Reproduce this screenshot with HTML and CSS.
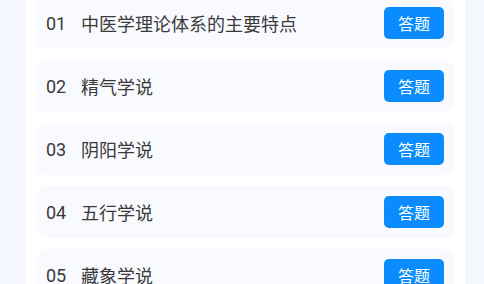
FILE: index.html
```html
<!doctype html>
<html lang="zh-CN">
	<head>
		<meta charset="UTF-8" />
		<meta name="viewport" content="width=device-width, initial-scale=1.0" />
		<title>章节列表</title>
		<link rel="stylesheet" href="styles.css">
	</head>
	<body>
		<main class="panel">
			<ul class="chapters">
				<li class="chapter">
					<span class="num">01</span>
					<span class="title">中医学理论体系的主要特点</span>
					<button type="button" class="answer">答题</button>
				</li>
				<li class="chapter">
					<span class="num">02</span>
					<span class="title">精气学说</span>
					<button type="button" class="answer">答题</button>
				</li>
				<li class="chapter">
					<span class="num">03</span>
					<span class="title">阴阳学说</span>
					<button type="button" class="answer">答题</button>
				</li>
				<li class="chapter">
					<span class="num">04</span>
					<span class="title">五行学说</span>
					<button type="button" class="answer">答题</button>
				</li>
				<li class="chapter">
					<span class="num">05</span>
					<span class="title">藏象学说</span>
					<button type="button" class="answer">答题</button>
				</li>
			</ul>
		</main>
	</body>
</html>
```

FILE: styles.css
```css
html,
body,
ul {
	margin: 0;
	padding: 0;
}

body {
	background-color: #f4f7fd;
	font-family: Roboto, "Noto Sans CJK SC", sans-serif;
	height: 284px;
	overflow: hidden;
}

.panel {
	background-color: #ffffff;
	margin: 0 19px 0 25px;
	padding: 0 11px;
	min-height: 284px;
}

/* the list is scrolled a little, so the first card is cut at the top */
.chapters {
	list-style: none;
	display: flex;
	flex-direction: column;
	gap: 11px;
	margin-top: -3px;
}

.chapter {
	display: flex;
	align-items: center;
	height: 52px;
	padding: 0 10px;
	box-sizing: border-box;
	background-color: #f8faff;
	border-radius: 10px;
	color: #3a3a3a;
	font-size: 18px;
}

.num {
	width: 35px;
}

.title {
	flex: 1;
}

.answer {
	width: 60px;
	height: 32px;
	border: 0;
	border-radius: 5px;
	background-color: #0a8cff;
	color: #ffffff;
	font-family: "Noto Sans CJK SC", sans-serif;
	font-size: 16px;
	padding: 0;
}
```
